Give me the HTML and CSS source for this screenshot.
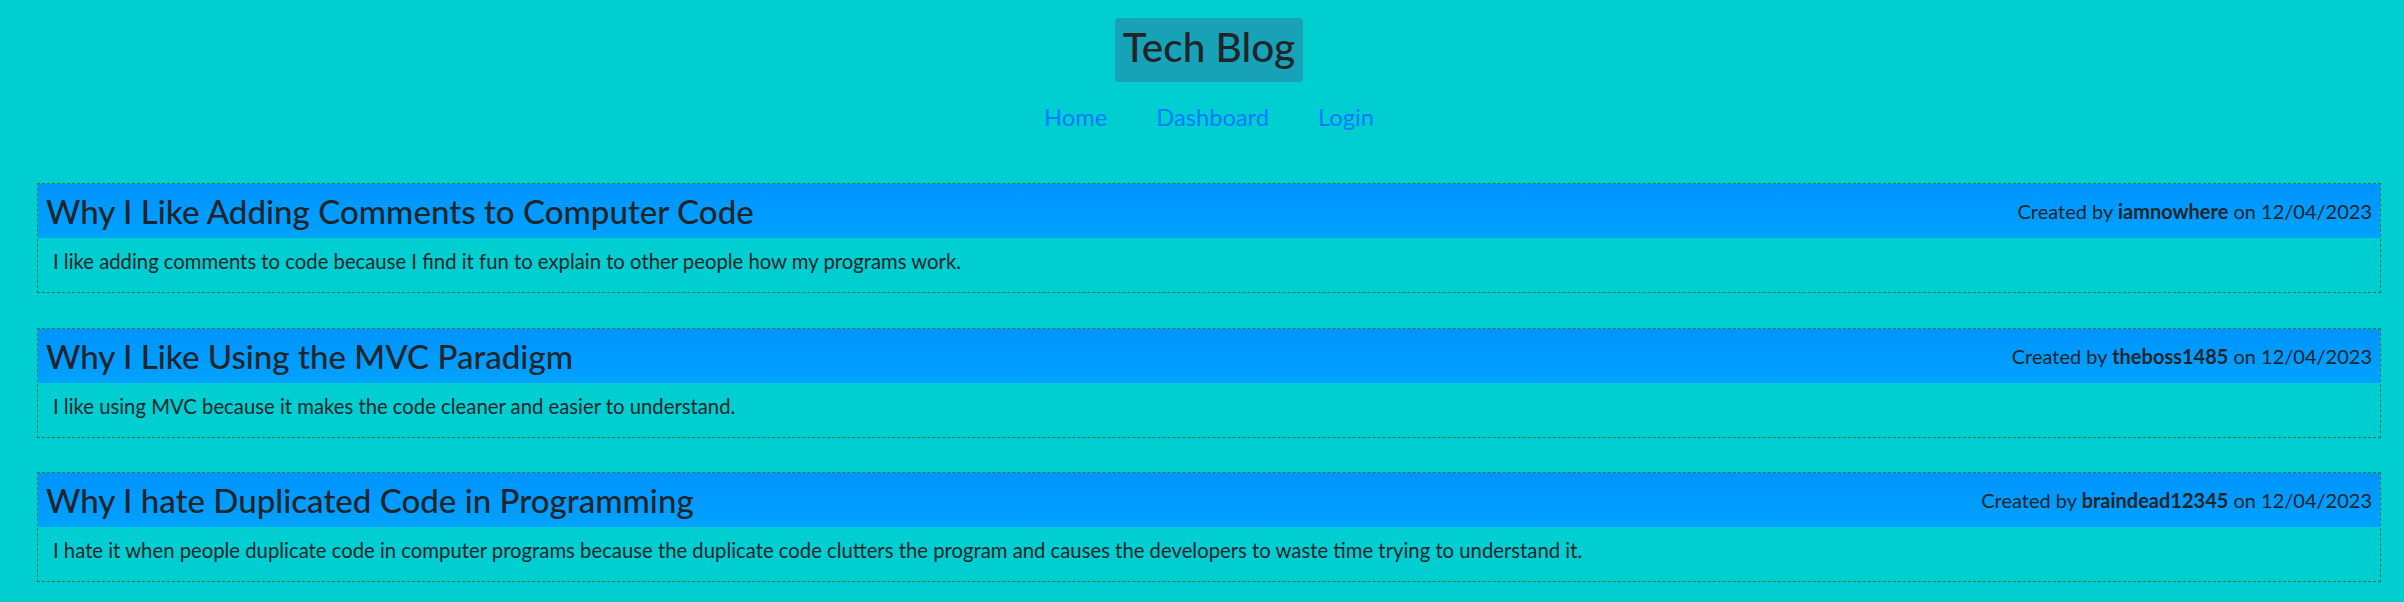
FILE: index.html
```html
<!DOCTYPE html>
<html lang="en">
<head>
<meta charset="utf-8">
<title>Tech Blog</title>
<link rel="stylesheet" href="styles.css">
</head>
<body>
<div class="page">
  <header class="site-header">
    <h1 class="brand">Tech Blog</h1>
    <nav class="nav">
      <a class="nav-link" href="#">Home</a>
      <a class="nav-link" href="#">Dashboard</a>
      <a class="nav-link" href="#">Login</a>
    </nav>
  </header>
  <main class="posts">
    <article class="post">
      <div class="post-head">
        <h2 class="post-title">Why I Like Adding Comments to Computer Code</h2>
        <p class="post-meta">Created by <strong>iamnowhere</strong> on 12/04/2023</p>
      </div>
      <div class="post-body">
        <p>I like adding comments to code because I find it fun to explain to other people how my programs work.</p>
      </div>
    </article>
    <article class="post">
      <div class="post-head">
        <h2 class="post-title">Why I Like Using the MVC Paradigm</h2>
        <p class="post-meta">Created by <strong>theboss1485</strong> on 12/04/2023</p>
      </div>
      <div class="post-body">
        <p>I like using MVC because it makes the code cleaner and easier to understand.</p>
      </div>
    </article>
    <article class="post">
      <div class="post-head">
        <h2 class="post-title">Why I hate Duplicated Code in Programming</h2>
        <p class="post-meta">Created by <strong>braindead12345</strong> on 12/04/2023</p>
      </div>
      <div class="post-body">
        <p>I hate it when people duplicate code in computer programs because the duplicate code clutters the program and causes the developers to waste time trying to understand it.</p>
      </div>
    </article>
  </main>
</div>
</body>
</html>
```

FILE: styles.css
```css
html, body {
  margin: 0;
  padding: 0;
}

body {
  background: #00ced1;
  color: #212529;
  font-family: Lato, "Noto Sans", sans-serif;
  font-size: 20px;
}

.page {
  margin: 0 23px 0 37px;
}

.site-header {
  display: flex;
  flex-direction: column;
  align-items: center;
  padding-top: 18px;
}

.brand {
  margin: 0;
  padding: 5px 8px 11px;
  font-size: 40.5px;
  font-weight: 500;
  line-height: 48px;
  background: #17a2b8;
  border-radius: 4px;
  color: #212529;
}

.nav {
  display: flex;
  gap: 49px;
  margin-top: 17px;
}

.nav-link {
  font-size: 23.7px;
  line-height: 36px;
  color: #007bff;
  text-decoration: none;
}

.posts {
  display: flex;
  flex-direction: column;
  gap: 34.5px;
  margin-top: 48px;
}

.post {
  border: 1px dashed #267a4c;
}

.post-head {
  display: flex;
  align-items: center;
  justify-content: space-between;
  height: 54px;
  box-sizing: border-box;
  padding: 8px 8px;
  background: linear-gradient(to bottom, #0094ff, #00a2ff);
}

.post-title {
  margin: 0;
  font-size: 33.1px;
  font-weight: 500;
  line-height: 38px;
  white-space: nowrap;
}

.post-meta {
  margin: 0;
  font-size: 20px;
  line-height: 30px;
  white-space: nowrap;
}

.post-meta strong {
  font-weight: 700;
}

.post-body {
  padding: 8px 15px 16px;
}

.post-body p {
  margin: 0;
  font-size: 20.3px;
  line-height: 30px;
}
```
